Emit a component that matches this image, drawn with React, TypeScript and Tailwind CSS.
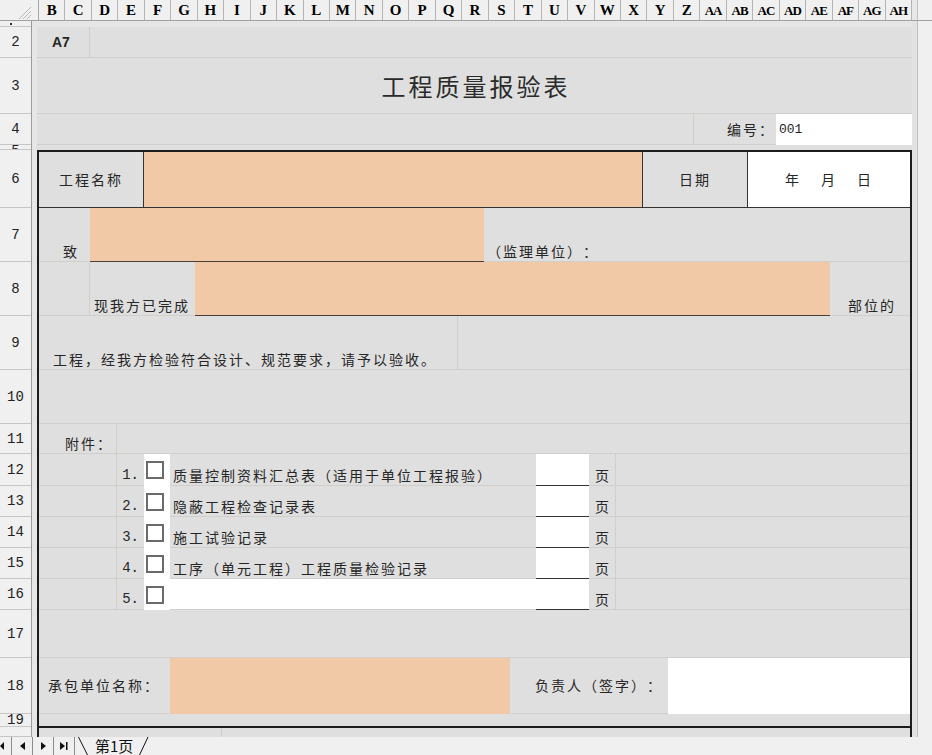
import React from "react";

const G = "border-[#d2cfcb]";
const DARK = "border-[#333333]";
const PEACH = "bg-[#f1c9a6]";

const cols = "B C D E F G H I J K L M N O P Q R S T U V W X Y Z AA AB AC AD AE AF AG AH".split(" ");

const rowHeads = [
  { l: "", c: "h-[6px]", dot: true },
  { l: "2", c: "h-[31px]" },
  { l: "3", c: "h-[56px]" },
  { l: "4", c: "h-[31px]" },
  { l: "5", c: "h-[5px]", clip: true },
  { l: "6", c: "h-[58px]" },
  { l: "7", c: "h-[54px]" },
  { l: "8", c: "h-[54px]" },
  { l: "9", c: "h-[54px]" },
  { l: "10", c: "h-[54px]" },
  { l: "11", c: "h-[30px]" },
  { l: "12", c: "h-[32px]" },
  { l: "13", c: "h-[31px]" },
  { l: "14", c: "h-[31px]" },
  { l: "15", c: "h-[31px]" },
  { l: "16", c: "h-[31px]" },
  { l: "17", c: "h-[48px]" },
  { l: "18", c: "h-[56px]" },
  { l: "19", c: "h-[13px]", clip: true },
  { l: "", c: "h-[10px]" },
];

const attachments = [
  { n: "1.", t: "质量控制资料汇总表（适用于单位工程报验）", h: "h-[32px]", white: false },
  { n: "2.", t: "隐蔽工程检查记录表", h: "h-[31px]", white: false },
  { n: "3.", t: "施工试验记录", h: "h-[31px]", white: false },
  { n: "4.", t: "工序（单元工程）工程质量检验记录", h: "h-[31px]", white: false },
  { n: "5.", t: "", h: "h-[31px]", white: true },
];

function ColumnHeader() {
  return (
    <div className="flex h-[21px] border-b border-[#a0a0a0] bg-[#f0f0f0]">
      <div className="w-[38px] h-full flex items-end justify-end pr-[6px] pb-[1px]">
        <svg width="14" height="13" viewBox="0 0 14 13">
          <line x1="13" y1="1" x2="1" y2="13" stroke="#b8b8b8" strokeWidth="1" />
          <line x1="13" y1="5" x2="5" y2="13" stroke="#b8b8b8" strokeWidth="1" />
          <line x1="13" y1="9" x2="9" y2="13" stroke="#b8b8b8" strokeWidth="1" />
        </svg>
      </div>
      <div className="w-[874px] grid grid-cols-[repeat(33,minmax(0,1fr))] border-l border-[#a8a8a8]">
        {cols.map((c) => (
          <div
            key={c}
            className={
              "flex items-center justify-center border-r border-[#b4b4b4] font-['Liberation_Serif',serif] font-bold text-black leading-none " +
              (c.length > 1 ? "text-[13px] tracking-[-1px]" : "text-[15px]")
            }
          >
            {c}
          </div>
        ))}
      </div>
      <div className="w-[20px] h-full flex">
        <div className="w-[5px] bg-[#e8e8e8]" />
        <div className="flex-1 border-l border-[#c0c0c0]" />
      </div>
    </div>
  );
}

function RowHeaders() {
  return (
    <div className="w-[32px] flex flex-col border-r border-[#9c9c9c] bg-[#f0f0f0] font-['Liberation_Mono',monospace] text-[14px] text-[#222]">
      {rowHeads.map((r, i) => (
        <div
          key={i}
          className={
            r.c +
            " overflow-hidden border-b border-[#c6c6c6] flex justify-center " +
            (r.clip ? "items-start leading-[12px]" : "items-center leading-none")
          }
        >
          {r.dot ? <div className="mt-[1px] ml-[-10px] w-[2px] h-[2px] bg-[#333]" /> : r.l}
        </div>
      ))}
    </div>
  );
}

function Sheet() {
  return (
    <div className="w-[875px] flex flex-col bg-[#dfdfdf] text-[14px] leading-[19px] tracking-[2px] whitespace-nowrap">
      <div className="h-[6px] bg-[#e6e6e6]" />

      {/* row 2 */}
      <div className="flex h-[31px]">
        <div className={"w-[53px] flex items-center pl-[15px] border-r border-b font-['Liberation_Sans',sans-serif] font-bold text-[14px] tracking-normal " + G}>
          A7
        </div>
        <div className={"flex-1 border-b " + G} />
      </div>

      {/* row 3 */}
      <div className={"flex h-[56px] items-center justify-center pl-[3px] border-b text-[24px] tracking-[3px] text-[#2a2a2a] " + G}>
        工程质量报验表
      </div>

      {/* row 4 */}
      <div className="flex h-[31px]">
        <div className={"w-[657px] border-r border-b " + G} />
        <div className={"w-[82px] flex items-center justify-end pr-[1px] border-b " + G}>编号：</div>
        <div className="flex-1 bg-white flex items-center pl-[3px] font-['Liberation_Mono',monospace] text-[13px] tracking-normal">
          001
        </div>
      </div>

      {/* row 5 */}
      <div className="h-[5px]" />

      {/* form table */}
      <div className="border-x-2 border-[#1c1c1c]">
        <div className="border-y-2 border-[#1c1c1c]">
          {/* row 6 */}
          <div className={"flex h-[56px] border-b " + DARK}>
            <div className={"w-[105px] flex items-center justify-center border-r " + DARK}>工程名称</div>
            <div className={"w-[499px] border-r " + PEACH + " " + DARK} />
            <div className={"w-[105px] flex items-center justify-center border-r " + DARK}>日期</div>
            <div className="flex-1 bg-white flex items-center justify-center gap-[20px]">
              <span>年</span>
              <span>月</span>
              <span>日</span>
            </div>
          </div>

          {/* row 7 */}
          <div className="flex h-[54px]">
            <div className={"w-[51px] flex items-end pl-[24px] border-b " + G}>致</div>
            <div className={"w-[394px] border-b border-[#4a4038] " + PEACH} />
            <div className={"flex-1 flex items-end pl-[3px] border-b " + G}>（监理单位）：</div>
          </div>

          {/* row 8 */}
          <div className="flex h-[54px]">
            <div className={"w-[51px] border-r border-b " + G} />
            <div className={"w-[105px] flex items-end pl-[4px] border-b " + G}>现我方已完成</div>
            <div className={"w-[635px] border-b border-[#4a4038] " + PEACH} />
            <div className={"flex-1 flex items-end justify-center pl-[4px] border-b " + G}>部位的</div>
          </div>

          {/* row 9 */}
          <div className="flex h-[54px]">
            <div className={"w-[419px] flex items-end pl-[14px] border-r border-b " + G}>
              工程，经我方检验符合设计、规范要求，请予以验收。
            </div>
            <div className={"flex-1 border-b " + G} />
          </div>

          {/* row 10 */}
          <div className={"h-[54px] border-b " + G} />

          {/* row 11 */}
          <div className="flex h-[30px]">
            <div className={"w-[78px] flex items-end pl-[26px] border-r border-b " + G}>附件：</div>
            <div className={"flex-1 border-b " + G} />
          </div>

          {/* rows 12-16 */}
          {attachments.map((a) => (
            <div key={a.n} className={"flex " + a.h}>
              <div className={"w-[78px] border-r border-b " + G} />
              <div className={"w-[27px] flex items-end justify-end pr-[5px] pb-[2px] border-b font-['Liberation_Mono',monospace] text-[14px] leading-[16px] tracking-normal " + G}>
                {a.n}
              </div>
              <div className="w-[26px] bg-white flex items-center pl-[2px]">
                <div className="w-[18px] h-[18px] border-2 border-[#6a6a6a]" />
              </div>
              <div className={"w-[366px] flex items-end pl-[3px] border-b " + G + (a.white ? " bg-white" : "")}>
                {a.t}
              </div>
              <div className={"w-[53px] bg-white border-b " + DARK} />
              <div className={"w-[27px] flex items-end justify-center pl-[2px] border-r border-b " + G}>页</div>
              <div className={"flex-1 border-b " + G} />
            </div>
          ))}

          {/* row 17 */}
          <div className={"h-[48px] border-b " + G} />

          {/* row 18 */}
          <div className="flex h-[56px]">
            <div className={"w-[131px] flex items-center pl-[9px] border-b " + G}>承包单位名称：</div>
            <div className={"w-[340px] " + PEACH} />
            <div className={"w-[158px] flex items-center pl-[25px] border-b " + G}>负责人（签字）：</div>
            <div className="flex-1 bg-white" />
          </div>

          {/* row 19 */}
          <div className="h-[12px]" />
        </div>

        {/* row 20 */}
        <div className="flex h-[9px]">
          <div className={"w-[183px] border-r " + G} />
          <div className="flex-1" />
        </div>
      </div>
    </div>
  );
}

function TabBar() {
  return (
    <div className="h-[18px] flex bg-[#f0f0f0]">
      <div className="w-[12px] h-full flex items-center border-r border-[#8c8c8c]">
        <svg width="6" height="8" viewBox="0 0 6 8" className="ml-[-1px]">
          <polygon points="5,0 5,8 1,4" fill="#111" />
        </svg>
      </div>
      <div className="w-[21px] h-full flex items-center justify-center border-r border-[#8c8c8c]">
        <svg width="5" height="8" viewBox="0 0 5 8">
          <polygon points="5,0 5,8 0,4" fill="#111" />
        </svg>
      </div>
      <div className="w-[21px] h-full flex items-center justify-center border-r border-[#8c8c8c]">
        <svg width="5" height="8" viewBox="0 0 5 8">
          <polygon points="0,0 0,8 5,4" fill="#111" />
        </svg>
      </div>
      <div className="w-[21px] h-full flex items-center justify-center border-r border-[#8c8c8c]">
        <svg width="8" height="8" viewBox="0 0 8 8">
          <polygon points="0,0 0,8 5,4" fill="#111" />
          <rect x="6" y="0" width="1.5" height="8" fill="#111" />
        </svg>
      </div>
      <div className="ml-[3px] h-full flex items-center">
        <svg width="10" height="18" viewBox="0 0 10 18">
          <line x1="0.5" y1="0" x2="9.5" y2="18" stroke="#111" strokeWidth="1" />
        </svg>
        <span className="ml-[7px] text-[15px] leading-[18px] text-[#111]">第1页</span>
        <svg width="10" height="18" viewBox="0 0 10 18" className="ml-[6px]">
          <line x1="0.5" y1="18" x2="9" y2="0" stroke="#111" strokeWidth="1" />
        </svg>
      </div>
    </div>
  );
}

export default function App() {
  return (
    <div className="w-[932px] h-[755px] overflow-hidden bg-[#f0f0f0] flex flex-col font-['Noto_Sans_CJK_SC',sans-serif] text-[#262626] [text-spacing-trim:space-all]">
      <ColumnHeader />
      <div className="flex h-[716px]">
        <RowHeaders />
        <div className="w-[5px] bg-[#e6e6e6]" />
        <Sheet />
        <div className="w-[20px] flex">
          <div className="w-[5px] bg-[#e2e2e2]" />
          <div className="flex-1 border-l border-[#c0c0c0] bg-[#f0f0f0]" />
        </div>
      </div>
      <TabBar />
    </div>
  );
}
